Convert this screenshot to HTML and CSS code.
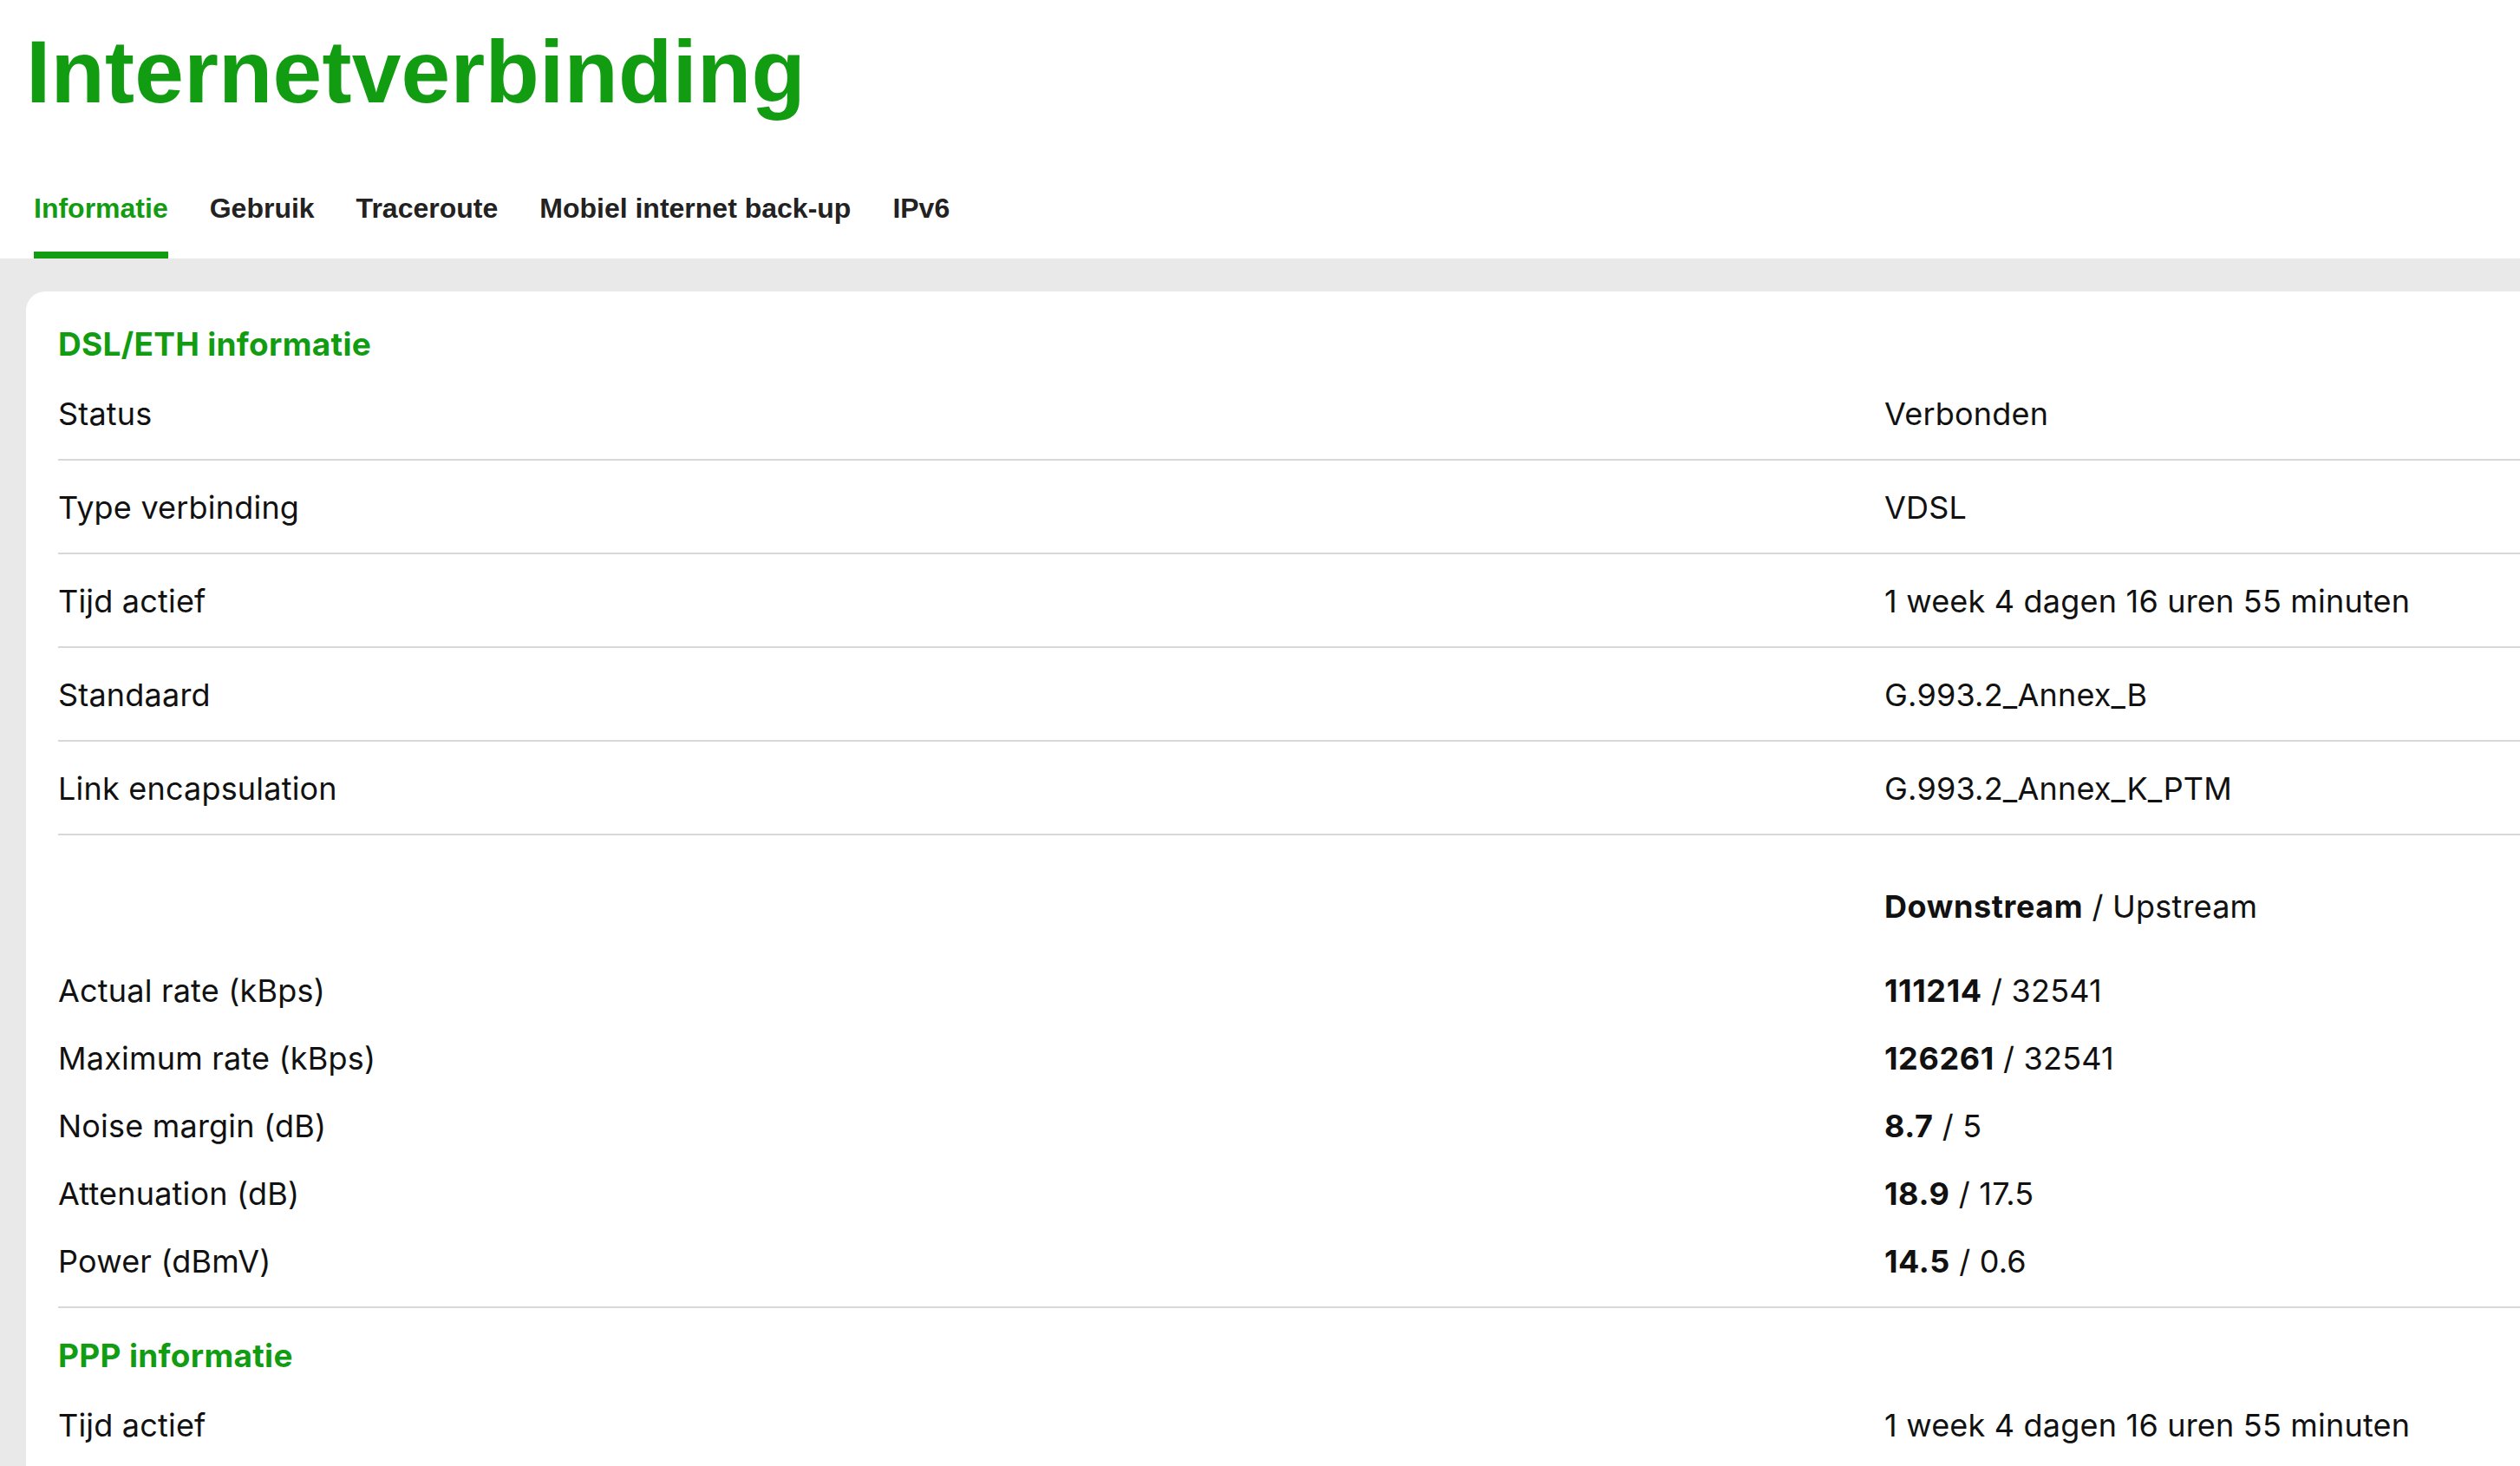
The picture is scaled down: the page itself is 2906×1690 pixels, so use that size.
FILE: index.html
```html
<!DOCTYPE html>
<html lang="nl">
<head>
<meta charset="utf-8">
<title>Internetverbinding</title>
<link rel="stylesheet" href="styles.css">
</head>
<body>
<header class="page-header">
  <h1 class="page-title">Internetverbinding</h1>
  <nav class="tabs">
    <a class="tab tab--active" href="#">Informatie</a>
    <a class="tab" href="#">Gebruik</a>
    <a class="tab" href="#">Traceroute</a>
    <a class="tab" href="#">Mobiel internet back-up</a>
    <a class="tab" href="#">IPv6</a>
  </nav>
</header>
<main class="content">
  <section class="card">
    <h2 class="section-title">DSL/ETH informatie</h2>
    <div class="info-table">
      <div class="info-row"><span class="info-label">Status</span><span class="info-value">Verbonden</span></div>
      <div class="info-row"><span class="info-label">Type verbinding</span><span class="info-value">VDSL</span></div>
      <div class="info-row"><span class="info-label">Tijd actief</span><span class="info-value">1 week 4 dagen 16 uren 55 minuten</span></div>
      <div class="info-row"><span class="info-label">Standaard</span><span class="info-value">G.993.2_Annex_B</span></div>
      <div class="info-row"><span class="info-label">Link encapsulation</span><span class="info-value">G.993.2_Annex_K_PTM</span></div>
    </div>
    <div class="stats">
      <div class="stats-row stats-row--head"><span class="info-label"></span><span class="info-value"><b>Downstream</b> / Upstream</span></div>
      <div class="stats-row"><span class="info-label">Actual rate (kBps)</span><span class="info-value"><b>111214</b> / 32541</span></div>
      <div class="stats-row"><span class="info-label">Maximum rate (kBps)</span><span class="info-value"><b>126261</b> / 32541</span></div>
      <div class="stats-row"><span class="info-label">Noise margin (dB)</span><span class="info-value"><b>8.7</b> / 5</span></div>
      <div class="stats-row"><span class="info-label">Attenuation (dB)</span><span class="info-value"><b>18.9</b> / 17.5</span></div>
      <div class="stats-row"><span class="info-label">Power (dBmV)</span><span class="info-value"><b>14.5</b> / 0.6</span></div>
    </div>
    <h2 class="section-title section-title--spaced">PPP informatie</h2>
    <div class="info-table">
      <div class="info-row info-row--last"><span class="info-label">Tijd actief</span><span class="info-value">1 week 4 dagen 16 uren 55 minuten</span></div>
    </div>
  </section>
</main>
</body>
</html>
```
FILE: styles.css
```css
html, body {
  margin: 0;
  padding: 0;
  overflow: hidden;
  background: #ffffff;
}

body {
  font-family: "Inter", "Liberation Sans", sans-serif;
  color: #111111;
}

.page-header {
  background: #ffffff;
  padding: 32px 0 0 30px;
}

.page-title {
  margin: 0 0 86px 0;
  font-family: "Liberation Sans", Arial, sans-serif;
  font-weight: 700;
  font-size: 102px;
  line-height: 102px;
  color: #129c12;
  letter-spacing: 0.2px;
}

.tabs {
  display: flex;
  gap: 48px;
  margin-left: 9px;
}

.tab {
  display: block;
  font-family: "Liberation Sans", Arial, sans-serif;
  font-weight: 700;
  font-size: 32px;
  line-height: 40px;
  padding-bottom: 30px;
  border-bottom: 8px solid transparent;
  color: #222222;
  text-decoration: none;
}

.tab--active {
  color: #129c12;
  border-bottom-color: #129c12;
}

.content {
  background: #e9e9e9;
  padding: 38px 0 0 30px;
}

.card {
  background: #ffffff;
  border-radius: 22px 0 0 0;
  width: 4300px;
  padding: 39px 0 80px 37px;
}

.section-title {
  margin: 0 0 4px 0;
  font-family: "Inter", "Liberation Sans", sans-serif;
  font-weight: 700;
  font-size: 37px;
  line-height: 44px;
  letter-spacing: 0.3px;
  color: #129c12;
}

.section-title--spaced {
  margin-top: 33px;
}

.info-row,
.stats-row {
  display: grid;
  grid-template-columns: 2106px 1fr;
  font-size: 36px;
  line-height: 44px;
  letter-spacing: 0.2px;
}

.info-row {
  padding: 32px 0 30px 0;
  border-bottom: 2px solid #d8d8d8;
}

.info-row--last {
  padding-bottom: 0;
  border-bottom: none;
}

.stats {
  padding-bottom: 13px;
  border-bottom: 2px solid #d8d8d8;
}

.stats-row {
  padding: 17px 0;
}

.stats-row--head {
  padding: 60px 0 36px 0;
}

.info-label,
.info-value {
  color: #111111;
  white-space: nowrap;
}

.info-value b {
  font-weight: 700;
  letter-spacing: 0.6px;
}
```
